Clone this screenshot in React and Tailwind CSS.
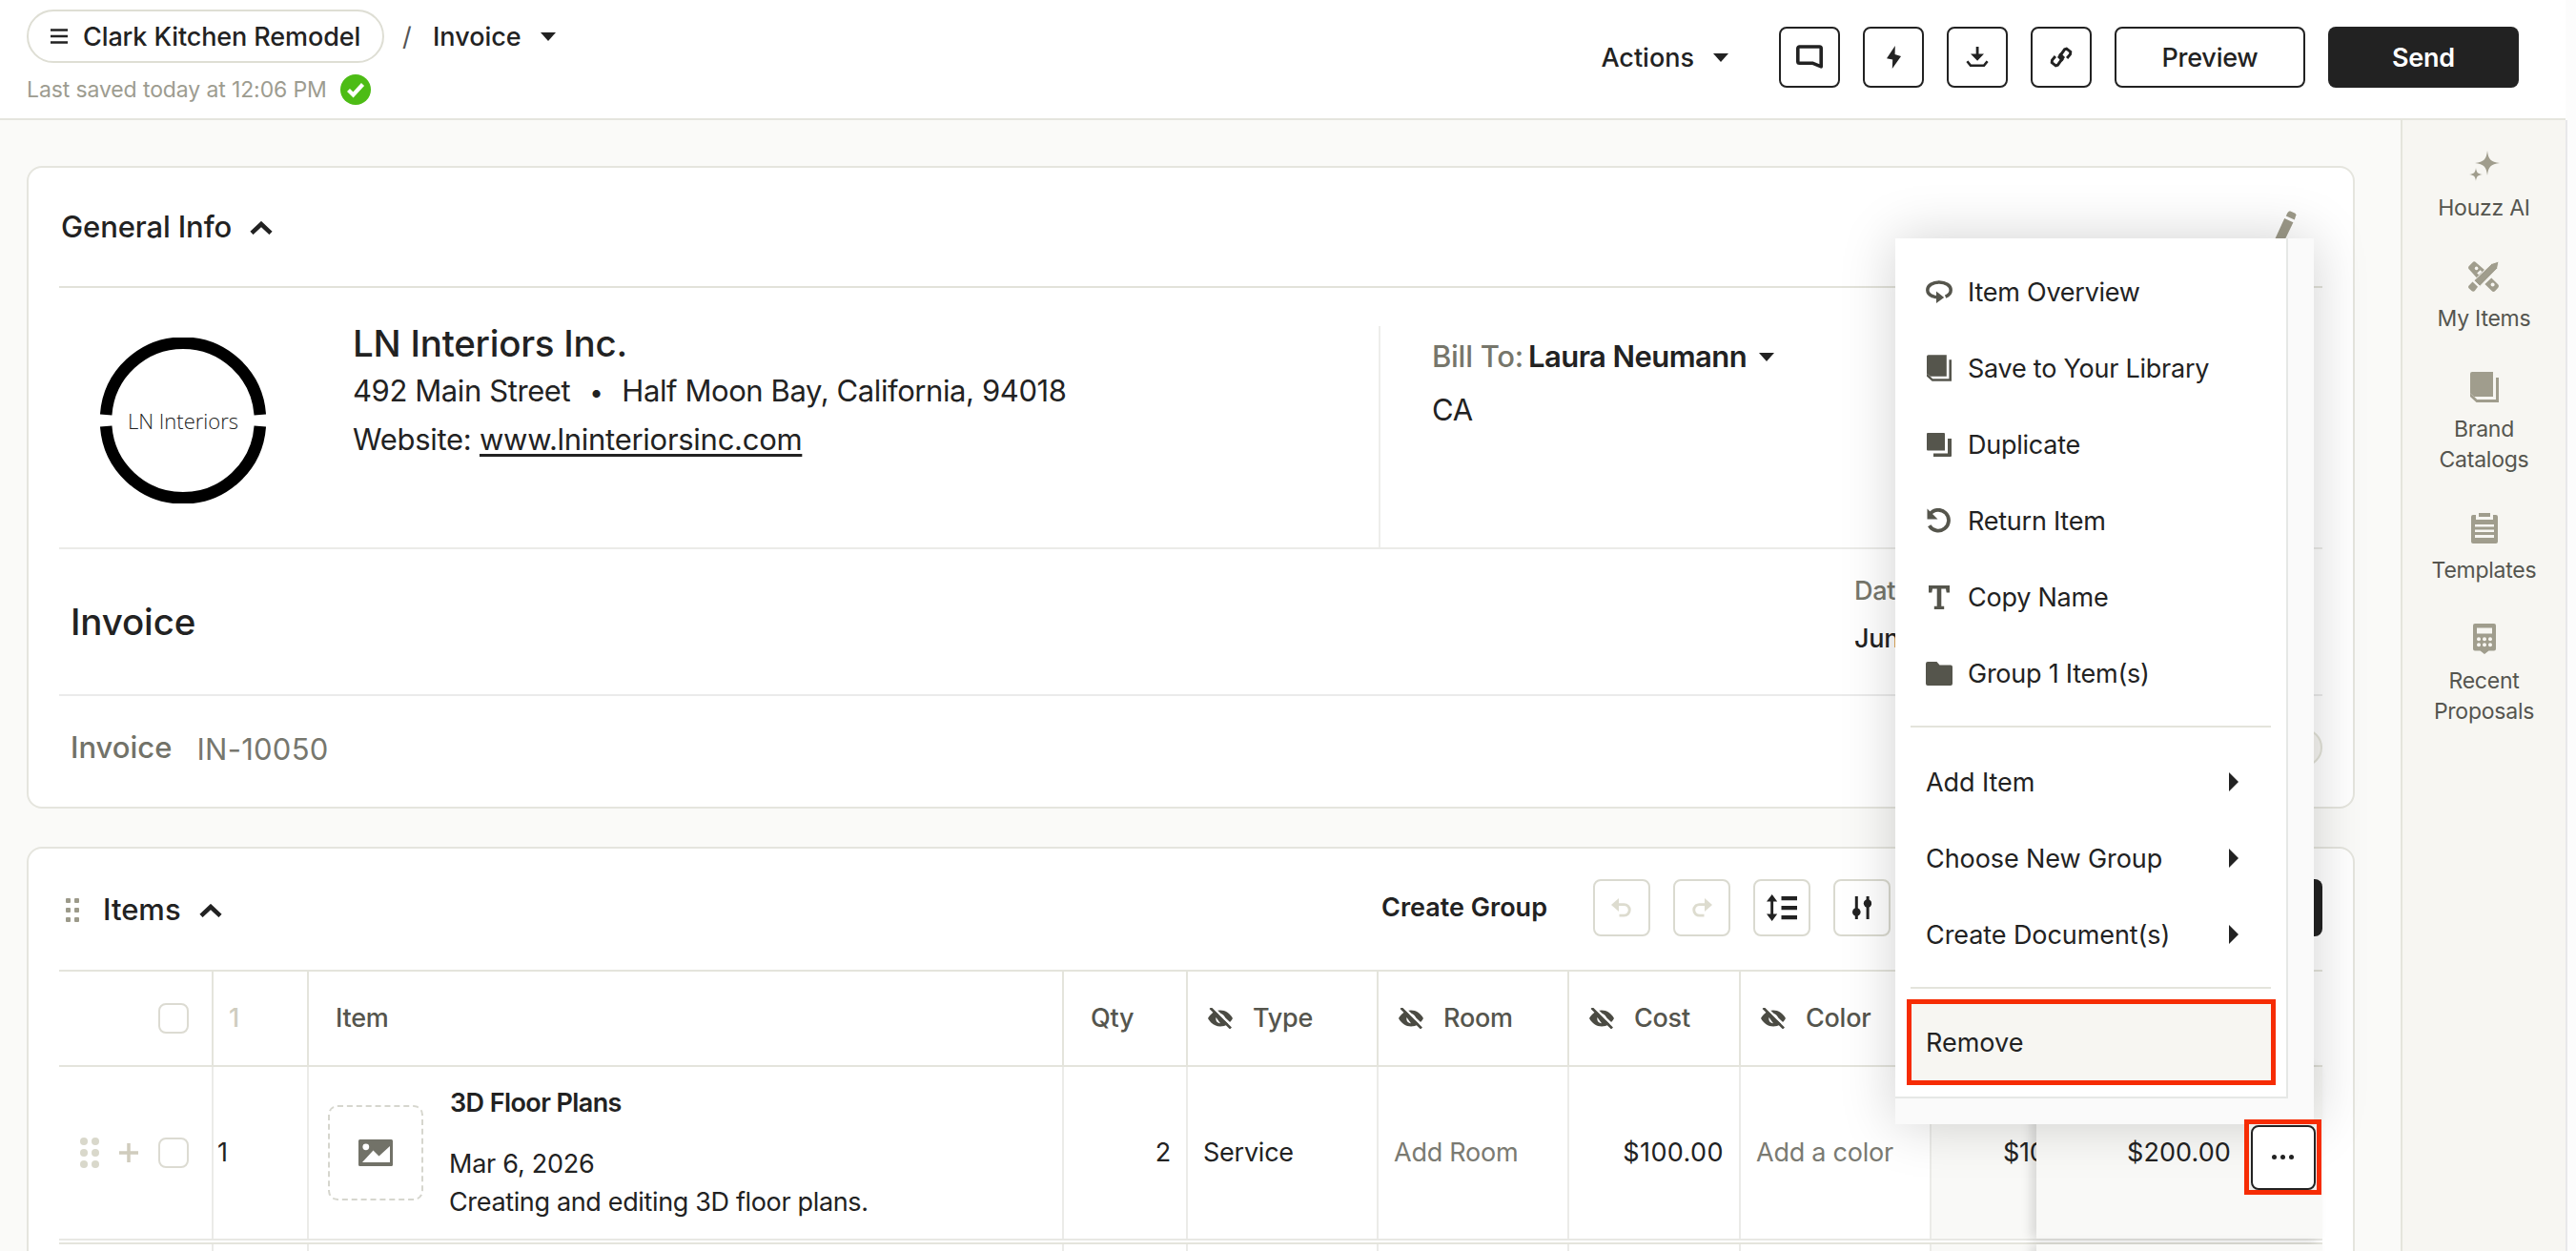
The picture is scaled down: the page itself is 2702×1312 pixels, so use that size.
import React from "react";

const Caret = ({ className = "" }) => (
  <svg viewBox="0 0 16 9" className={"h-[9px] w-4 shrink-0 " + className} fill="#222">
    <path d="M0 0h16L8 9z" />
  </svg>
);

const ChevronUp = () => (
  <svg viewBox="0 0 24 14" className="h-[14px] w-6 shrink-0" fill="none" stroke="#222" strokeWidth="4.6">
    <path d="M2 12.4 12 3l10 9.4" />
  </svg>
);

const Menu = () => (
  <svg viewBox="0 0 18 16" className="h-4 w-[18px] shrink-0" stroke="#222" strokeWidth="2.4">
    <path d="M0 1.5h18M0 8h18M0 14.5h18" />
  </svg>
);

const SavedBadge = () => (
  <svg viewBox="0 0 32 32" className="size-8">
    <circle cx="16" cy="16" r="16" fill="#4dbc15" />
    <path d="m8.5 16.5 5 5 10-11" fill="none" stroke="#fff" strokeWidth="4.2" />
  </svg>
);

const CommentIcon = () => (
  <svg viewBox="0 0 28 26" className="h-[26px] w-7" fill="none" stroke="#222" strokeWidth="3.6" strokeLinejoin="round">
    <path d="M3.5 2h21a1.7 1.7 0 0 1 1.7 1.7v19.2L17 19.2H3.5a1.7 1.7 0 0 1-1.7-1.7V3.7A1.7 1.7 0 0 1 3.5 2z" />
  </svg>
);

const BoltIcon = () => (
  <svg viewBox="0 0 15 24" className="h-6 w-[15px]" fill="#222">
    <path d="M8.8 0 0 13.2l6.2 1.4L5.8 24 15 11 8.6 9z" />
  </svg>
);

const DownloadIcon = () => (
  <svg viewBox="0 0 24 22" className="h-[22px] w-6">
    <path d="M10.7 0h2.8v7.5H19L12.1 14.8 5 7.5h5.7z" fill="#222" />
    <path d="M1.4 15.2 5 19.8h14l3.6-4.6" fill="none" stroke="#222" strokeWidth="2.6" />
  </svg>
);

const LinkIcon = () => (
  <svg viewBox="0 0 24 24" className="size-6" fill="none" stroke="#222" strokeWidth="2.9">
    <path d="M13.8 15.6 9.9 11.9l5.7-8.1 2.1-.7 4.1 3.3-.3 2.6-3.4 4" />
    <path d="m10.2 8.4 3.9 3.7-5.7 8.1-2.1.7-4.1-3.3.3-2.6 3.4-4" />
  </svg>
);

const PencilIcon = () => (
  <svg viewBox="0 0 30 42" className="h-[42px] w-[30px]" fill="#9d9a89">
    <path d="m19.500 2 1.600-1.600h1.400l5 2.300.900 1.600-1.600 5.200-9-4z" />
    <path d="m16.200 8 9.200 4.200L14 36 5 41l.2-9z" />
  </svg>
);

const SparkleIcon = () => (
  <svg viewBox="0 0 32 32" className="size-8" fill="#a09d8d">
    <path d="M19 0c1 9 3.500 12 13 13-9.500 1-12 4-13 13-1-9-3.500-12-13-13 9.500-1 12-4 13-13z" />
    <path d="M7 18c.6 5 2 6.400 7 7-5 .6-6.400 2-7 7-.6-5-2-6.400-7-7 5-.6 6.400-2 7-7z" />
  </svg>
);

const ToolsIcon = () => (
  <svg viewBox="0 0 32 32" className="size-8" fill="#a09d8d">
    <path d="M4.500 1.200c1-1.200 2.400-1.200 3.500 0L17 9 9 17.500.900 8.600C-.2 7.400-.2 6 .8 5z" />
    <path d="M24.300 17.500 31 24c1.200 1.200 1.300 2.600.3 3.700l-3 3.300c-1.200 1.200-2.600 1.200-3.700 0l-7.200-7z" />
    <path d="M4.500 21.500 10 26.800l-3 4c-.9 1.300-2.300 1.400-3.500.3L.8 28.600C-.3 27.500-.2 26.200.9 25.200z" />
    <path d="M6 20.200 24.500 2.500 32 0l-1.500 7.600L12.200 26.200z" stroke="#f7f6f2" strokeWidth=".9" />
    <circle cx="25.600" cy="24.500" r="2" fill="#f7f6f2" />
    <circle cx="8.600" cy="7.400" r="1.800" fill="#f7f6f2" />
    <path d="m9.200 12.500 3.400-3.200 1.800 1.700-3.400 3.200z" fill="#f7f6f2" />
  </svg>
);

const BookIcon = ({ className }) => (
  <svg viewBox="0 0 30 32" className={className} fill="currentColor">
    <path d="M2 0h22v26H5a2 2 0 0 0-.7.100L0 22.500V2A2 2 0 0 1 2 0z" />
    <path d="M27 6h3v26H6.500L0 26v-3.500L4.200 26l3 3H27z" />
  </svg>
);

const ClipboardIcon = () => (
  <svg viewBox="0 0 28 32" className="h-8 w-7" fill="#a09d8d">
    <path d="M8 0h12v4H8z" />
    <path fillRule="evenodd" d="M2 2h3v5h18V2h3a2 2 0 0 1 2 2v26a2 2 0 0 1-2 2H2a2 2 0 0 1-2-2V4a2 2 0 0 1 2-2zm2 10v2.500h20V12zm0 5.500V20h20v-2.500zM4 23v3h20v-3z" />
  </svg>
);

const CalculatorIcon = () => (
  <svg viewBox="0 0 24 32" className="h-8 w-6">
    <path d="M2 0h20a2 2 0 0 1 2 2v24.500a2 2 0 0 1-2 2h-5.500L12 32l-4.500-3.500H2a2 2 0 0 1-2-2V2a2 2 0 0 1 2-2z" fill="#a09d8d" />
    <path d="M4 4.500h16v6H4z" fill="#f7f6f2" />
    {[16.200, 22.300].map((y) => [6, 12, 18].map((x) => <circle key={x + "-" + y} cx={x} cy={y} r="2" fill="#f7f6f2" />))}
  </svg>
);

const OverviewIcon = () => (
  <svg viewBox="0 0 28 24" className="h-6 w-7">
    <path d="M7.500 16.800C4 15.500 1.800 13 1.800 10.200 1.800 5.500 7.200 1.900 14 1.900s12.200 3.600 12.200 8.300c0 3-2.200 5.600-5.600 7" fill="none" stroke="#55554c" strokeWidth="3.5" />
    <path d="M11 11.500 19.200 18 11 24z" fill="#55554c" />
    <path d="M6.500 16.300c2 1 3.600 1.400 6 1.600" stroke="#55554c" strokeWidth="3.400" fill="none" />
  </svg>
);

const DuplicateIcon = () => (
  <svg viewBox="0 0 26 25" className="h-[25px] w-[26px]" fill="#55554c">
    <path d="M1 0h17a1 1 0 0 1 1 1v17.500H1a1 1 0 0 1-1-1V1a1 1 0 0 1 1-1z" />
    <path d="M22 6h4v18a1 1 0 0 1-1 1H7v-3.500h15z" />
  </svg>
);

const ReturnIcon = () => (
  <svg viewBox="0 0 28 26" className="h-[26px] w-7">
    <path d="M4.500 6A10.900 10.900 0 1 1 3.700 18.200" fill="none" stroke="#55554c" strokeWidth="3.800" />
    <path d="M1.500.5v11h11z" fill="#55554c" />
  </svg>
);

const TextIcon = () => (
  <svg viewBox="0 0 22 25" className="h-[25px] w-[22px]" fill="#55554c">
    <path d="M0 0h22v7.500h-3.300L18 3.500h-4.700v18.200h2.900V25H5.800v-3.300h2.900V3.500H4L3.300 7.500H0z" />
  </svg>
);

const FolderIcon = () => (
  <svg viewBox="0 0 28 25" className="h-[25px] w-7" fill="#55554c">
    <path d="M2 0h9.500l3 3.500H26a2 2 0 0 1 2 2V23a2 2 0 0 1-2 2H2a2 2 0 0 1-2-2V2a2 2 0 0 1 2-2z" />
  </svg>
);

const UndoIcon = ({ className = "" }) => (
  <svg viewBox="0 0 22 20" className={"h-5 w-[22px] " + className}>
    <path d="M8 0v14L0 7z" fill="#dddccf" />
    <path d="M7 6.600h6.500a5.700 5.700 0 0 1 0 11.500h-5" fill="none" stroke="#dddccf" strokeWidth="2.900" />
  </svg>
);

const DensityIcon = () => (
  <svg viewBox="0 0 32 28" className="h-7 w-8" fill="#222">
    <path d="m5.700 0 5.500 7.500H7.100v13h4.100L5.700 28 0 20.500h4.200v-13H0zM15.500 2H32v4.200H15.500zM15.500 12H32v4.200H15.500zM15.500 22H32v4.200H15.500z" />
  </svg>
);

const SlidersIcon = () => (
  <svg viewBox="0 0 20 24" className="h-6 w-5" fill="#222">
    <path d="M2.800 0h3v24h-3zM14.600 0h3v24h-3z" />
    <circle cx="4.300" cy="16.500" r="4.300" />
    <circle cx="16" cy="7.500" r="4.200" />
  </svg>
);

const HiddenIcon = () => (
  <svg viewBox="0 0 26 22" className="h-[22px] w-[26px] shrink-0">
    <path d="M13 2.500c5.500 0 10 3.200 13 8.500-3 5.300-7.500 8.500-13 8.500S3 16.300 0 11c3-5.300 7.500-8.500 13-8.500z" fill="#4b4b43" />
    <path d="M13 6.200a4.900 4.900 0 0 1 4.900 4.900c0 1.400-.6 2.600-1.500 3.500L9.500 7.700A4.900 4.900 0 0 1 13 6.200z" fill="#fff" />
    <path d="M8.500 10c-.8 3 1 6 4.500 6.200z" fill="#fff" />
    <path d="M5.500 0 27 20.600" stroke="#fff" strokeWidth="2.600" />
    <path d="M2.500 0 24 21.500" stroke="#4b4b43" strokeWidth="2.700" />
  </svg>
);

const ImageIcon = () => (
  <svg viewBox="0 0 36 28" className="h-7 w-9">
    <path d="M1.500 0h33A1.500 1.500 0 0 1 36 1.500v25a1.500 1.500 0 0 1-1.500 1.500h-33A1.500 1.500 0 0 1 0 26.500v-25A1.500 1.500 0 0 1 1.500 0z" fill="#727268" />
    <circle cx="7.800" cy="7.800" r="3.400" fill="#fff" />
    <path d="M4 24 15.500 11.500l6 6L33 7v17z" fill="#fff" />
  </svg>
);

const ArrowRight = () => (
  <svg viewBox="0 0 10 20" className="h-5 w-[10px]" fill="#222">
    <path d="M0 0v20l10-10z" />
  </svg>
);

const DragDots = ({ className, round }) => (
  <div className={"grid grid-cols-2 content-between " + className}>
    {[0, 1, 2, 3, 4, 5].map((i) => (
      <span key={i} className={(i % 2 ? "justify-self-end " : "") + (round ? "size-2 rounded-full bg-[#d9d8cb]" : "size-[5px] rounded-[1px] bg-[#9c9a8a]")} />
    ))}
  </div>
);

const Checkbox = () => <span className="block size-8 rounded-lg border-2 border-[#dcdbd2] bg-white" />;

const IconButton = ({ children }) => (
  <button className="flex size-16 items-center justify-center rounded-lg border-2 border-[#222] bg-white">{children}</button>
);

const ToolButton = ({ children }) => (
  <button className="flex size-[60px] items-center justify-center rounded-lg border-2 border-[#dadad0] bg-white">{children}</button>
);

const sideItems = [
  [<SparkleIcon />, ["Houzz AI"]],
  [<ToolsIcon />, ["My Items"]],
  [<BookIcon className="h-8 w-[30px] text-[#a09d8d]" />, ["Brand", "Catalogs"]],
  [<ClipboardIcon />, ["Templates"]],
  [<CalculatorIcon />, ["Recent", "Proposals"]],
];

const menuItems = [
  [<OverviewIcon />, "Item Overview"],
  [<BookIcon className="h-7 w-[26px] text-[#55554c]" />, "Save to Your Library"],
  [<DuplicateIcon />, "Duplicate"],
  [<ReturnIcon />, "Return Item"],
  [<TextIcon />, "Copy Name"],
  [<FolderIcon />, "Group 1 Item(s)"],
];

const hiddenHeads = ["Type", "Room", "Cost", "Color"];

function Header() {
  return (
    <header className="flex h-[126px] w-[2691px] justify-between border-b-2 border-[#e5e5de] bg-white pl-7 pr-[49px]">
      <div className="pt-[10px]">
        <div className="flex h-14 items-center font-medium">
          <div className="flex h-14 w-[375px] items-center gap-4 rounded-full border-2 border-[#deded4] pl-[23px]">
            <Menu />
            <span className="pt-[2px] tracking-[-0.004em]">Clark Kitchen Remodel</span>
          </div>
          <span className="ml-[19px] w-8 pt-[2px] font-normal text-[#555]">/</span>
          <span className="pt-[2px] tracking-normal">Invoice</span>
          <Caret className="ml-5" />
        </div>
        <div className="mt-3 flex h-8 items-center text-[23px] tracking-[-0.005em] text-[#9d9c90]">
          <span className="w-[329px]">Last saved today at 12:06 PM</span>
          <SavedBadge />
        </div>
      </div>
      <div className="flex items-center gap-6 pb-1 font-medium">
        <div className="mr-[29px] flex items-center gap-5">
          <span className="pt-[2px] tracking-normal">Actions</span>
          <Caret />
        </div>
        <IconButton><CommentIcon /></IconButton>
        <IconButton><BoltIcon /></IconButton>
        <IconButton><DownloadIcon /></IconButton>
        <IconButton><LinkIcon /></IconButton>
        <button className="h-16 w-[200px] rounded-lg border-2 border-[#222] pt-[2px] font-medium">Preview</button>
        <button className="h-16 w-[200px] rounded-lg bg-[#222] pt-[2px] font-semibold text-white">Send</button>
      </div>
    </header>
  );
}

function GeneralInfo() {
  return (
    <section className="h-[674px] w-[2442px] shrink-0 rounded-2xl border-2 border-[#e5e5de] bg-white px-8">
      <div className="flex h-[126px] items-center justify-between border-b-2 border-[#e2e2da]">
        <h2 className="flex items-center gap-[19px] pl-[2px] pt-[1px] text-[31px] font-medium tracking-[-0.004em]">General Info <ChevronUp /></h2>
        <div className="mr-[26px] mt-2"><PencilIcon /></div>
      </div>
      <div className="flex h-[274px] border-b-2 border-[#ebebe8]">
        <div className="flex w-[308px] pl-[43px] pt-[52px]">
          <svg viewBox="0 0 174 174" className="size-[174px]">
            <path d="M6.200 81a81 81 0 0 1 161.600 0M6.200 93a81 81 0 0 0 161.600 0" fill="none" stroke="#000" strokeWidth="12.500" />
            <text x="87" y="95.500" textAnchor="middle" textLength="116" className="fill-[#222] font-['Open_Sans',sans-serif] text-[22px] font-light tracking-normal">LN Interiors</text>
          </svg>
        </div>
        <div className="w-[1076px] pt-[33px] text-[31px] leading-[50px] tracking-[-0.013em]">
          <div className="text-[38.500px] font-medium tracking-[-0.006em]">LN Interiors Inc.</div>
          <div className="whitespace-pre">492 Main Street<span className="inline-block w-[54px] text-center text-[26px]">•</span>Half Moon Bay, California, 94018</div>
          <div className="-mt-[1px] tracking-[-0.009em]">Website: <span className="underline decoration-[3px] underline-offset-[4px]">www.lninteriorsinc.com</span></div>
        </div>
        <div className="mt-10 flex-1 border-l-2 border-[#ededeb] pl-[54px] pt-1 text-[31px] leading-[56px]">
          <div className="flex items-center font-semibold tracking-[-0.018em]">
            <span className="w-[101px] font-medium tracking-[-0.009em] text-[#76766b]">Bill To:</span>Laura Neumann<Caret className="ml-[13px]" />
          </div>
          <div>CA</div>
        </div>
      </div>
      <div className="flex h-[154px] items-center justify-between border-b-2 border-[#ebebeb] pl-3 font-medium">
        <h1 className="pt-[1px] text-[38.500px] font-medium tracking-[-0.004em]">Invoice</h1>
        <div className="w-[491px] pb-[15px] leading-[50px]">
          <div className="text-[#76766b]">Date</div>
          <div>June 16, 2025</div>
        </div>
      </div>
      <div className="flex h-[108px] items-center justify-between pl-3 text-[31px]">
        <div className="flex items-center gap-[26px]">
          <span className="font-medium tracking-normal text-[#727268]">Invoice</span>
          <span className="pt-1 tracking-[0.008em] text-[#77776e]">IN-10050</span>
        </div>
        <span className="size-10 rounded-full border-2 border-[#e2e2d8] bg-[#f7f6f2]" />
      </div>
    </section>
  );
}

const cols = "grid grid-cols-[162px_100px_792px_130px_200px_200px_180px_200px_110px_300px]";

function Items() {
  return (
    <section className="h-[600px] w-[2442px] shrink-0 rounded-2xl border-2 border-[#e5e5de] bg-white px-8">
      <div className="flex h-[127px] items-center justify-between">
        <h2 className="flex items-center pl-[7px] pt-[2px] text-[31px] font-medium tracking-normal">
          <DragDots className="mr-[25px] h-[25px] w-[14px]" />
          <span className="mr-[19px]">Items</span>
          <ChevronUp />
        </h2>
        <div className="flex items-center gap-6 pb-1">
          <span className="mr-6 pt-[2px] font-semibold tracking-normal">Create Group</span>
          <ToolButton><UndoIcon /></ToolButton>
          <ToolButton><UndoIcon className="-scale-x-100" /></ToolButton>
          <ToolButton><DensityIcon /></ToolButton>
          <ToolButton><SlidersIcon /></ToolButton>
          <button className="ml-[209px] h-[60px] w-[220px] rounded-lg bg-[#222]" />
        </div>
      </div>
      <div className={cols + " h-[102px] border-y-2 border-[#e4e4dc] font-medium text-[#55554d]"}>
        <div className="flex items-center justify-end border-r-2 border-[#e4e4dc] pr-6"><Checkbox /></div>
        <div className="flex items-center border-r-2 border-[#e4e4dc] pl-4 text-[#cfcdbf]">1</div>
        <div className="flex items-center border-r-2 border-[#e4e4dc] pl-7">Item</div>
        <div className="flex items-center border-r-2 border-[#e4e4dc] pl-7">Qty</div>
        {hiddenHeads.map((h) => (
          <div key={h} className="flex items-center gap-[21px] border-r-2 border-[#e4e4dc] pl-[21px]"><HiddenIcon />{h}</div>
        ))}
        <div />
        <div />
      </div>
      <div className={cols + " h-[182px] border-b-2 border-[#e8e8e4]"}>
        <div className="flex items-center justify-end border-r-2 border-[#ebebe8] pr-6">
          <DragDots round className="h-8 w-5" />
          <svg viewBox="0 0 20 20" className="mx-[21px] size-5" stroke="#d0ccbd" strokeWidth="3.500"><path d="M10 0v20M0 10h20" /></svg>
          <Checkbox />
        </div>
        <div className="flex items-center border-r-2 border-[#ebebe8] pl-1">1</div>
        <div className="flex items-center border-r-2 border-[#ebebe8] pl-5">
          <div className="flex size-[100px] items-center justify-center rounded-[10px] border-2 border-dashed border-[#d6d6ce]"><ImageIcon /></div>
          <div className="ml-[27px] leading-10">
            <div className="mb-6 pl-[1px] font-semibold tracking-[-0.022em]">3D Floor Plans</div>
            <div>Mar 6, 2026</div>
            <div className="tracking-[-0.013em]">Creating and editing 3D floor plans.</div>
          </div>
        </div>
        <div className="flex items-center justify-end border-r-2 border-[#ebebe8] pr-4">2</div>
        <div className="flex items-center border-r-2 border-[#ebebe8] pl-4">Service</div>
        <div className="flex items-center border-r-2 border-[#ebebe8] pl-4 text-[#7a7a72]">Add Room</div>
        <div className="flex items-center justify-end border-r-2 border-[#ebebe8] pr-4 tracking-[0.015em]">$100.00</div>
        <div className="flex items-center border-r-2 border-[#ebebe8] pl-4 text-[#7a7a72]">Add a color</div>
        <div className="flex items-center overflow-hidden bg-[#f9f9f7] pl-[75px]">$100.00</div>
        <div className="flex items-center bg-[#f9f9f7] pl-[95px] tracking-[0.003em] shadow-[-6px_0_10px_rgba(0,0,0,0.12)]">$200.00</div>
      </div>
      <div className={cols + " mt-[2px] h-[100px] border-t-2 border-[#e4e4dc]"}>
        {[0, 1, 2, 3, 4, 5, 6, 7].map((i) => <div key={i} className="border-r-2 border-[#ebebe8]" />)}
        <div className="bg-[#f9f9f7]" />
        <div className="bg-[#f9f9f7] shadow-[-6px_0_10px_rgba(0,0,0,0.12)]" />
      </div>
    </section>
  );
}

function ContextMenu() {
  return (
    <div className="absolute left-[1988px] top-[250px] h-[929px] w-[439px] bg-[#fafafa] shadow-[0_0_54px_rgba(0,0,0,0.18)]">
      <div className="h-[902px] w-[412px] border-b-2 border-r-2 border-[#e6e8e6] bg-white pt-4">
        {menuItems.map(([icon, label]) => (
          <div key={label} className="flex h-20 items-center pl-8">
            <span className="flex w-7 justify-center">{icon}</span>
            <span className="pl-4 pt-[2px]">{label}</span>
          </div>
        ))}
        <div className="mb-[17px] ml-4 mt-[15px] h-[2px] w-[378px] bg-[#e4e4dc]" />
        {["Add Item", "Choose New Group", "Create Document(s)"].map((label) => (
          <div key={label} className="flex h-20 items-center justify-between pl-8 pr-[50px]">
            <span className="pt-[2px] tracking-[-0.003em]">{label}</span>
            <ArrowRight />
          </div>
        ))}
        <div className="ml-4 mt-[15px] h-[2px] w-[378px] bg-[#e4e4dc]" />
        <div className="ml-3 mt-[11px] flex h-[90px] w-[387px] items-center border-[5px] border-[#f62c04] bg-[#f7f6f2] pl-[15px] pt-[3px] tracking-normal">Remove</div>
      </div>
    </div>
  );
}

export default function App() {
  return (
    <div className="relative h-[1312px] w-[2702px] overflow-hidden bg-[#fcfcfc] font-['Inter',sans-serif] text-[27px] tracking-[-0.009em] text-[#222]">
      <Header />
      <div className="flex h-[1186px] w-[2693px] border-r-2 border-[#e8e8ea]">
        <main className="flex w-[2518px] shrink-0 flex-col gap-10 bg-[#fafaf8] pl-7 pt-12">
          <GeneralInfo />
          <Items />
        </main>
        <aside className="flex flex-1 flex-col items-center gap-10 border-l-2 border-[#e5e5dc] bg-[#f7f6f2] pt-8 text-[23px] leading-8 text-[#55554f]">
          {sideItems.map(([icon, lines]) => (
            <div key={lines[0]} className="flex flex-col items-center">
              {icon}
              <div className="mt-3 text-center">{lines.map((l) => <div key={l}>{l}</div>)}</div>
            </div>
          ))}
        </aside>
      </div>
      <ContextMenu />
      <div className="absolute left-[2354px] top-[1174px] flex h-[79px] w-[81px] items-center justify-center border-[5px] border-[#f62c04] bg-[#efefed]">
        <button className="flex size-[68px] items-center justify-center gap-1 rounded-lg border-[2.500px] border-[#222] bg-white">
          {[0, 1, 2].map((i) => <span key={i} className="size-[5px] rounded-full bg-[#222]" />)}
        </button>
      </div>
    </div>
  );
}
